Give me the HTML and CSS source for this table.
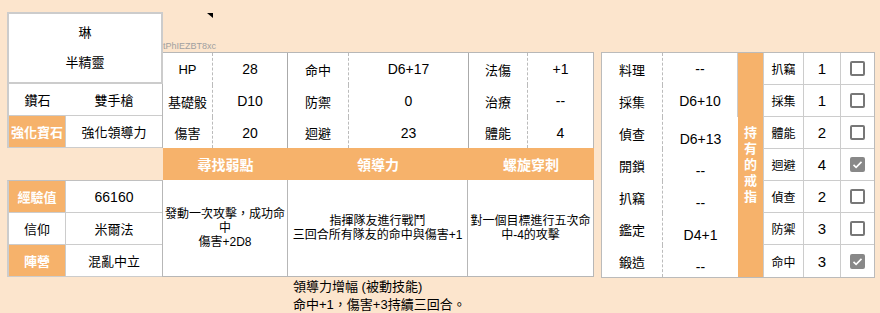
FILE: index.html
```html
<!DOCTYPE html>
<html>
<head>
  <meta charset="utf-8">
  <title>角色卡 - 琳</title>
  <link rel="stylesheet" href="styles.css">
</head>
<body>
  <div class="sheet">

    <div class="left">
      <div class="name-box">
        <div>琳</div>
        <div>半精靈</div>
      </div>
      <div class="pairs gem">
        <div class="row"><div class="k">鑽石</div><div class="v">雙手槍</div></div>
        <div class="row"><div class="k sep hl">強化寶石</div><div class="v">強化領導力</div></div>
      </div>
      <div class="pairs info">
        <div class="row"><div class="k sep hl">經驗值</div><div class="v num">66160</div></div>
        <div class="row"><div class="k sep">信仰</div><div class="v">米爾法</div></div>
        <div class="row"><div class="k sep hl">陣營</div><div class="v">混亂中立</div></div>
      </div>
    </div>

    <div class="mid">
      <div class="tag-strip">
        <span class="note-mark"></span>
        <div class="sheet-id">tPhIEZBT8xc</div>
      </div>
      <div class="stats">
        <div class="k">HP</div><div class="v">28</div>
        <div class="k">命中</div><div class="v">D6+17</div>
        <div class="k">法傷</div><div class="v last">+1</div>
        <div class="k">基礎骰</div><div class="v">D10</div>
        <div class="k">防禦</div><div class="v">0</div>
        <div class="k">治療</div><div class="v last">--</div>
        <div class="k">傷害</div><div class="v">20</div>
        <div class="k">迴避</div><div class="v">23</div>
        <div class="k">體能</div><div class="v last">4</div>
      </div>
      <div class="skill-head">
        <div>尋找弱點</div>
        <div>領導力</div>
        <div>螺旋穿刺</div>
      </div>
      <div class="skill-desc">
        <div>發動一次攻擊，成功命<br>中<br>傷害+2D8</div>
        <div>指揮隊友進行戰鬥<br>三回合所有隊友的命中與傷害+1</div>
        <div>對一個目標進行五次命<br>中-4的攻擊</div>
      </div>
      <div class="skill-note">
        領導力增幅 (被動技能)<br>
        命中+1，傷害+3持續三回合。
      </div>
    </div>

    <div class="right">
      <div class="abilities">
        <div class="craft">
          <div class="k">料理</div><div class="v edge">--</div>
          <div class="k">採集</div><div class="v edge">D6+10</div>
          <div class="k">偵查</div><div class="v low">D6+13</div>
          <div class="k">開鎖</div><div class="v low">--</div>
          <div class="k">扒竊</div><div class="v low">--</div>
          <div class="k">鑑定</div><div class="v low">D4+1</div>
          <div class="k">鍛造</div><div class="v low">--</div>
        </div>
        <div class="ring-label"><span>持有的戒指</span></div>
        <div class="rings">
          <div class="name">扒竊</div><div class="lv">1</div><div class="box"><span class="cb"></span></div>
          <div class="name">採集</div><div class="lv">1</div><div class="box"><span class="cb"></span></div>
          <div class="name">體能</div><div class="lv">2</div><div class="box"><span class="cb"></span></div>
          <div class="name">迴避</div><div class="lv">4</div><div class="box"><span class="cb on"><svg viewBox="0 0 15 15" width="15" height="15"><path d="M3.5 7.8l2.6 2.5 5.4-5.4" fill="none" stroke="#fff" stroke-width="1.6"/></svg></span></div>
          <div class="name">偵查</div><div class="lv">2</div><div class="box"><span class="cb"></span></div>
          <div class="name">防禦</div><div class="lv">3</div><div class="box"><span class="cb"></span></div>
          <div class="name">命中</div><div class="lv">3</div><div class="box"><span class="cb on"><svg viewBox="0 0 15 15" width="15" height="15"><path d="M3.5 7.8l2.6 2.5 5.4-5.4" fill="none" stroke="#fff" stroke-width="1.6"/></svg></span></div>
        </div>
      </div>
    </div>

  </div>
</body>
</html>
```

FILE: styles.css
```css
body {
  margin: 0;
  background-color: #fce5cd;
  font-family: "Liberation Sans", "Noto Sans CJK TC", sans-serif;
  font-size: 13px;
  color: #000;
}

.sheet {
  display: flex;
  align-items: flex-start;
  padding: 12px 0 0 7px;
}

/* 左側：名字、寶石、經驗 */
.left {
  width: 156px;
}

.name-box {
  height: 72px;
  box-sizing: border-box;
  border: 2px solid #ccc;
  background-color: #fff;
  display: flex;
  flex-direction: column;
  align-items: center;
  justify-content: center;
}

.name-box div {
  line-height: 30px;
}

.pairs {
  background-color: #fff;
  border-left: 2px solid #ccc;
  border-right: 1px solid #b7b7b7;
}

.pairs .row {
  display: flex;
  height: 32px;
  box-sizing: border-box;
  border-bottom: 1px solid #ccc;
}

.pairs .k {
  width: 57px;
  box-sizing: border-box;
  display: flex;
  align-items: center;
  justify-content: center;
}

.pairs .k.sep {
  border-right: 1px solid #ccc;
}

.pairs .v {
  flex: 1;
  display: flex;
  align-items: center;
  justify-content: center;
}

.pairs .num {
  font-size: 14px;
}

.info {
  margin-top: 32px;
  border-top: 1px solid #c0c0c0;
}

.hl {
  background-color: #f6b26b;
  color: #fff;
  font-weight: bold;
}

/* 中間：數值與技能 */
.mid {
  width: 431px;
}

.tag-strip {
  height: 40px;
  display: flex;
  flex-direction: column;
  justify-content: space-between;
}

.note-mark {
  display: block;
  width: 6px;
  height: 5px;
  margin: 1px 0 0 44px;
  background-color: #000;
  clip-path: polygon(0 0, 100% 0, 100% 100%);
}

.sheet-id {
  font-size: 9px;
  line-height: 12px;
  color: #a0a0a0;
  white-space: nowrap;
}

.stats {
  display: grid;
  grid-template-columns: 50px 75px 61px 120px 59px 65px;
  grid-template-rows: 32px 32px 31px;
  background-color: #fff;
  border-top: 1px solid #b7b7b7;
  border-right: 1px solid #b7b7b7;
}

.stats div {
  display: flex;
  align-items: center;
  justify-content: center;
  box-sizing: border-box;
}

.stats .k {
  border-right: 1px dashed #bbb;
}

.stats .v {
  border-right: 1px solid #aaa;
  font-size: 14px;
}

.stats .v.last {
  border-right: none;
}

.skill-head {
  display: grid;
  grid-template-columns: 125px 180px 126px;
  height: 32px;
  background-color: #f6b26b;
  color: #fff;
  font-weight: bold;
  font-size: 14px;
}

.skill-head div {
  display: flex;
  align-items: center;
  justify-content: center;
}

.skill-desc {
  display: grid;
  grid-template-columns: 125px 180px 126px;
  height: 97px;
  background-color: #fff;
}

.skill-desc div {
  display: flex;
  align-items: center;
  justify-content: center;
  text-align: center;
  box-sizing: border-box;
  border-right: 1px solid #b7b7b7;
  border-bottom: 1px solid #b7b7b7;
  font-size: 12px;
  line-height: 14px;
}

.skill-note {
  margin-left: 130px;
  padding-top: 1px;
  line-height: 18px;
}

/* 右側：生活技能與戒指 */
.right {
  margin-left: 7px;
  padding-top: 40px;
}

.abilities {
  display: flex;
  background-color: #fff;
  border: 1px solid #bbb;
}

.craft {
  display: grid;
  grid-template-columns: 61px 75px;
  grid-auto-rows: 32px;
}

.craft div {
  display: flex;
  align-items: center;
  justify-content: center;
  box-sizing: border-box;
}

.craft .k {
  border-right: 1px dashed #bbb;
}

.craft .v {
  font-size: 14px;
}

.craft .v.edge {
  border-right: 1px solid #ccc;
}

.craft .v.low {
  padding-top: 12px;
}

.ring-label {
  width: 25px;
  background-color: #f6b26b;
  color: #fff;
  font-weight: bold;
  display: flex;
  align-items: center;
  justify-content: center;
}

.ring-label span {
  width: 13px;
  line-height: 16px;
  text-align: center;
}

.rings {
  display: grid;
  grid-template-columns: 40px 37px 34px;
  grid-auto-rows: 32px;
}

.rings div {
  display: flex;
  align-items: center;
  justify-content: center;
  box-sizing: border-box;
  border-left: 1px solid #ccc;
  border-bottom: 1px solid #ccc;
}

.rings div:nth-last-child(-n+3) {
  border-bottom: none;
}

.rings .name {
  font-size: 12px;
}

.rings .lv {
  font-size: 15px;
}

.cb {
  display: block;
  width: 15px;
  height: 15px;
  box-sizing: border-box;
  border: 2px solid #777;
  border-radius: 2px;
  position: relative;
}

.cb.on {
  background-color: #888;
  border-color: #888;
}

.cb svg {
  position: absolute;
  left: -2px;
  top: -2px;
}
```
